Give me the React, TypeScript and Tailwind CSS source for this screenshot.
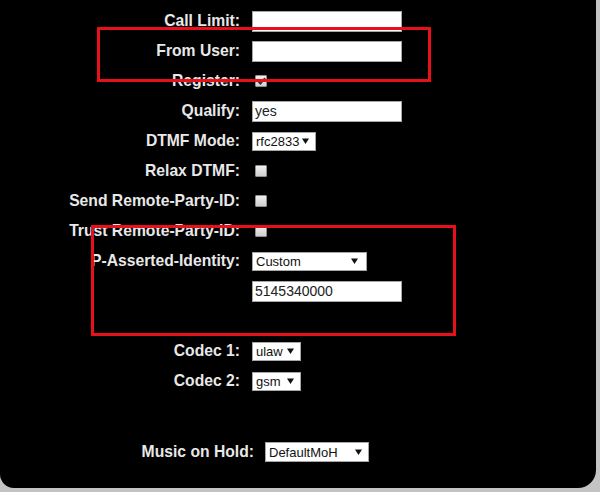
import { ReactNode } from "react";

const font = { fontFamily: '"Liberation Sans", Arial, sans-serif' };

function TextInput({ value = "" }: { value?: string }) {
	return (
		<input
			readOnly
			value={value}
			className="h-[21px] w-[150px] border border-[#a6a6a6] bg-white pl-[2px] text-[14px] text-[#222] outline-none"
			style={font}
		/>
	);
}

function Select({ value, width, height = 19, arrowRight = 6 }: { value: string; width: number; height?: number; arrowRight?: number }) {
	return (
		<div
			className="relative flex items-center border border-[#a6a6a6] bg-white pl-[3px] text-[13px] text-[#111]"
			style={{ ...font, width, height }}
		>
			<span className="leading-none">{value}</span>
			<svg
				width="7"
				height="6"
				viewBox="0 0 7 6"
				className="pointer-events-none absolute top-1/2 -translate-y-1/2"
				style={{ right: arrowRight }}
			>
				<path d="M0 0.5 L7 0.5 L3.5 6 Z" fill="#111" />
			</svg>
		</div>
	);
}

function Checkbox({ checked = false }: { checked?: boolean }) {
	return (
		<div className="ml-[3px] flex h-[12px] w-[12px] items-center justify-center rounded-[1px] border border-[#8f8f8f] bg-gradient-to-b from-[#f0f0f0] to-[#cfcfcf]">
			{checked && (
				<svg width="9" height="8" viewBox="0 0 9 8">
					<path d="M1 4.2 L3.4 6.6 L8 1.2" stroke="#333" strokeWidth="1.8" fill="none" />
				</svg>
			)}
		</div>
	);
}

function Row({ label, children }: { label?: string; children?: ReactNode }) {
	return (
		<div className="grid h-[30px] grid-cols-[240px_auto] items-center gap-x-[12px]">
			<span className="whitespace-nowrap text-right text-[15.7px] font-bold text-[#e8e8e8]" style={font}>
				{label}
			</span>
			<div className="flex items-center">{children}</div>
		</div>
	);
}

export default function App() {
	return (
		<div className="h-[492px] w-[600px] overflow-hidden bg-[#c4c4c4]">
			<div className="relative h-[488px] w-[596px] rounded-bl-[14px] rounded-br-[18px] bg-black pt-[6px]">
				<Row label="Call Limit:">
					<TextInput />
				</Row>
				<Row label="From User:">
					<TextInput />
				</Row>
				<Row label="Register:">
					<Checkbox checked />
				</Row>
				<Row label="Qualify:">
					<TextInput value="yes" />
				</Row>
				<Row label="DTMF Mode:">
					<Select value="rfc2833" width={64} />
				</Row>
				<Row label="Relax DTMF:">
					<Checkbox />
				</Row>
				<Row label="Send Remote-Party-ID:">
					<Checkbox />
				</Row>
				<Row label="Trust Remote-Party-ID:">
					<Checkbox />
				</Row>
				<Row label="P-Asserted-Identity:">
					<Select value="Custom" width={115} arrowRight={8} />
				</Row>
				<Row>
					<TextInput value="5145340000" />
				</Row>
				<Row />
				<Row label="Codec 1:">
					<Select value="ulaw" width={49} />
				</Row>
				<Row label="Codec 2:">
					<Select value="gsm" width={49} />
				</Row>

				<div className="mt-[41px] grid h-[30px] grid-cols-[254px_auto] items-center gap-x-[11px]">
					<span className="whitespace-nowrap text-right text-[15.7px] font-bold text-[#e8e8e8]" style={font}>
						Music on Hold:
					</span>
					<div className="flex items-center">
						<Select value="DefaultMoH" width={104} height={20} />
					</div>
				</div>

				{/* annotation boxes */}
				<div className="pointer-events-none absolute left-[97px] top-[27px] h-[55px] w-[334px] border-[3px] border-[#e8101a]" />
				<div className="pointer-events-none absolute left-[91px] top-[225px] h-[111px] w-[365px] border-[3px] border-[#e8101a]" />
			</div>
		</div>
	);
}
